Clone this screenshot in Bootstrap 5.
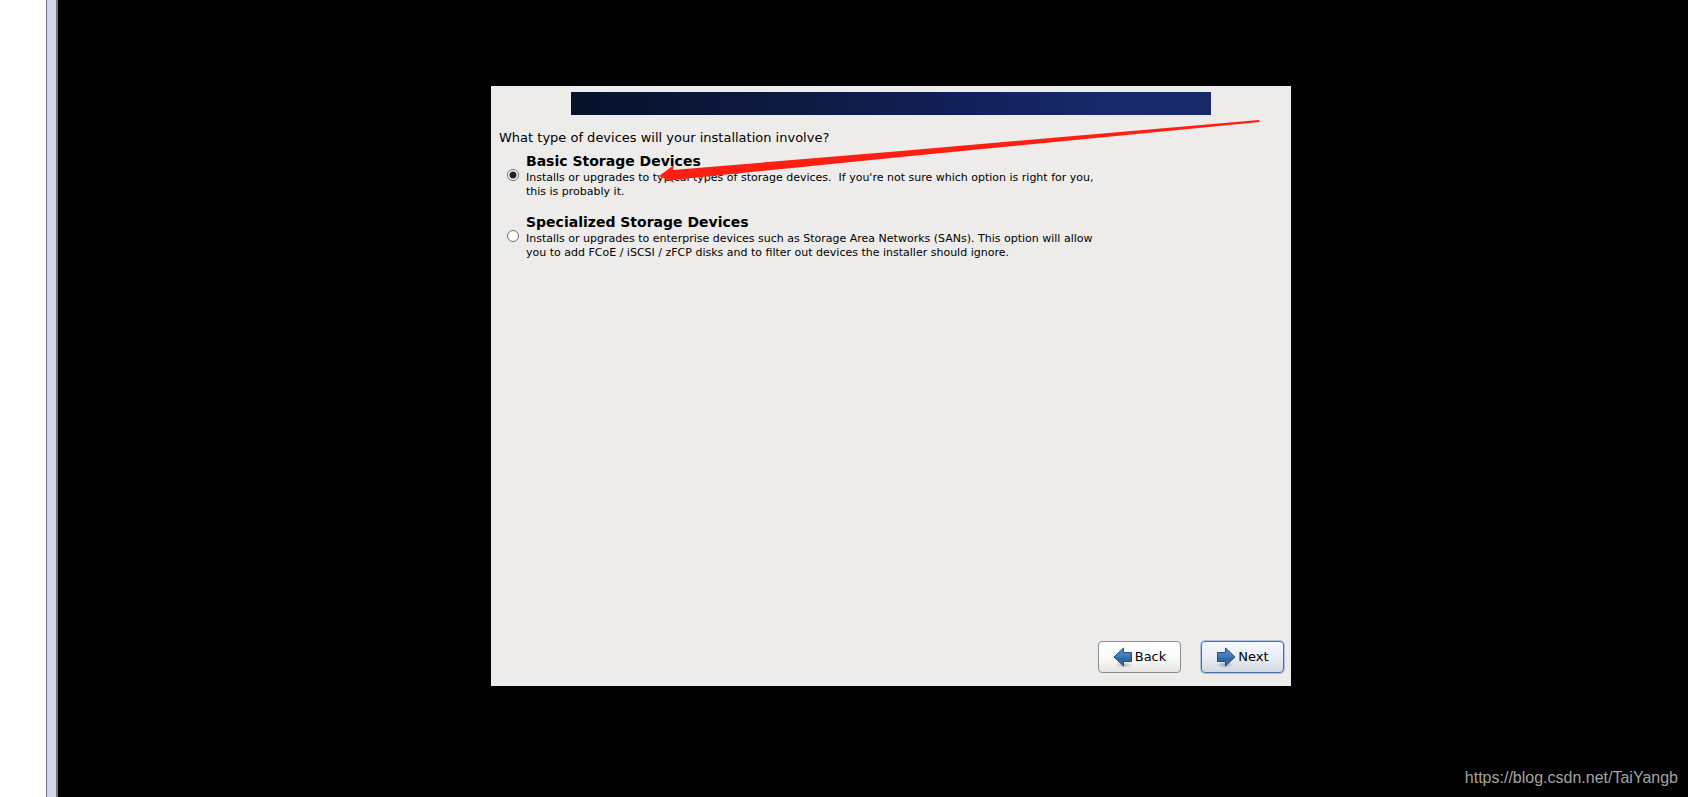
<!DOCTYPE html>
<html lang="en">
<head>
<meta charset="utf-8">
<meta name="viewport" content="width=device-width, initial-scale=1">
<title>Storage devices</title>
<link href="https://cdn.jsdelivr.net/npm/bootstrap@5.3.0/dist/css/bootstrap.min.css" rel="stylesheet">
<style>
body { font-family: "DejaVu Sans", sans-serif; font-size: 13px; line-height: 16px; color: #000; background: #000; }
.gutter { width: 46px; background: #fff; }
.divider { width: 12px; background: #d3d9ed; border-left: 1px solid #6f7286; border-right: 2px solid #77776f; }
.screen { padding: 0 0 25px 36px; }
.installer { width: 800px; max-width: 100%; min-height: 600px; background: #edecea; padding: 6px 7px 13px; }
.banner { width: 640px; max-width: 100%; height: 23px; background: linear-gradient(90deg, #08112a 0%, #0f1b45 40%, #13205a 62%, #172a6c 85%, #172968 100%); }
.question { margin: 15px 0 7px 1px; }
.choice { gap: 7px; margin-bottom: 15px; }
.choice-title { font-size: 14px; font-weight: 700; margin-bottom: 2px; }
.choice-text { font-size: 11px; line-height: 14px; }
.dot { appearance: none; flex: none; width: 12px; height: 12px; margin: 0 0 3px 9px; border: 1px solid #6d6d6b; border-radius: 50%; background: #fff; }
.dot:checked { background: radial-gradient(circle, #222 0 3px, #fff 4px); }
.actions { gap: 20px; }
.nav-btn { width: 83px; height: 32px; padding: 0; font-size: 13px; line-height: 16px; color: #000; border: 1px solid #8f8d89; border-radius: 4px; background: linear-gradient(#fff, #fbfbfa 50%, #e6e5e3); }
.nav-btn:hover { color: #000; border-color: #8f8d89; }
.nav-btn.primary { border-color: #4b72a8; background: linear-gradient(#f7f9fd, #e9edf4 50%, #d5d9e1); box-shadow: 0 0 0 1px #a9c1e2; }
.arrow-note { left: 0; top: 0; pointer-events: none; }
.watermark { right: 10px; bottom: 9px; font: 16px/20px "Liberation Sans", sans-serif; color: #a3a3a3; }
</style>
</head>
<body>
<svg width="0" height="0" class="position-absolute" aria-hidden="true">
  <defs>
    <linearGradient id="blue" x1="0" y1="0" x2="0" y2="1"><stop offset="0" stop-color="#5f8bc0"/><stop offset=".5" stop-color="#4478b4"/><stop offset=".55" stop-color="#3465a4"/><stop offset="1" stop-color="#3a6cab"/></linearGradient>
    <radialGradient id="shade"><stop offset="0" stop-color="#000" stop-opacity=".25"/><stop offset="1" stop-color="#000" stop-opacity="0"/></radialGradient>
  </defs>
</svg>
<div class="d-flex min-vh-100 position-relative">
  <div class="gutter flex-shrink-0"></div>
  <div class="divider flex-shrink-0"></div>
  <main class="screen flex-grow-1 d-flex align-items-center justify-content-center">
    <form class="installer position-relative d-flex flex-column">
      <div class="banner align-self-center"></div>
      <p class="question">What type of devices will your installation involve?</p>
      <div class="choice d-flex align-items-center">
        <input class="dot" type="radio" name="storage" id="basic" checked>
        <label for="basic"><span class="choice-title d-block">Basic Storage Devices</span><span class="choice-text d-block">Installs or upgrades to typical types of storage devices.&nbsp; If you're not sure which option is right for you,<br>this is probably it.</span></label>
      </div>
      <div class="choice d-flex align-items-center">
        <input class="dot" type="radio" name="storage" id="special">
        <label for="special"><span class="choice-title d-block">Specialized Storage Devices</span><span class="choice-text d-block">Installs or upgrades to enterprise devices such as Storage Area Networks (SANs). This option will allow<br>you to add FCoE / iSCSI / zFCP disks and to filter out devices the installer should ignore.</span></label>
      </div>
      <div class="actions d-flex justify-content-end mt-auto">
        <button type="button" class="nav-btn btn d-flex align-items-center justify-content-center"><svg width="22" height="22" viewBox="0 0 22 22" aria-hidden="true"><ellipse cx="11" cy="19" rx="9" ry="3" fill="url(#shade)"/><path d="M1 11 10.500 2V6.500H18.500V15.500H10.500V20Z" fill="url(#blue)" stroke="#204a87"/></svg>Back</button>
        <button type="button" class="nav-btn btn primary d-flex align-items-center justify-content-center"><svg width="22" height="22" viewBox="0 0 22 22" aria-hidden="true"><ellipse cx="9" cy="19" rx="9" ry="3" fill="url(#shade)"/><path d="M19 11 9.500 2V6.500H1.500V15.500H9.500V20Z" fill="url(#blue)" stroke="#204a87"/></svg>Next</button>
      </div>
      <svg class="arrow-note position-absolute" width="800" height="110" viewBox="0 0 800 110" aria-hidden="true"><path fill="#ff1f12" d="M168 90 183 79 182 84 410 65 768 34 769 36 410 71 181 94 184 97Z"/></svg>
    </form>
  </main>
  <span class="watermark position-absolute">https://blog.csdn.net/TaiYangb</span>
</div>
<script src="https://cdn.jsdelivr.net/npm/bootstrap@5.3.0/dist/js/bootstrap.bundle.min.js"></script>
</body>
</html>
